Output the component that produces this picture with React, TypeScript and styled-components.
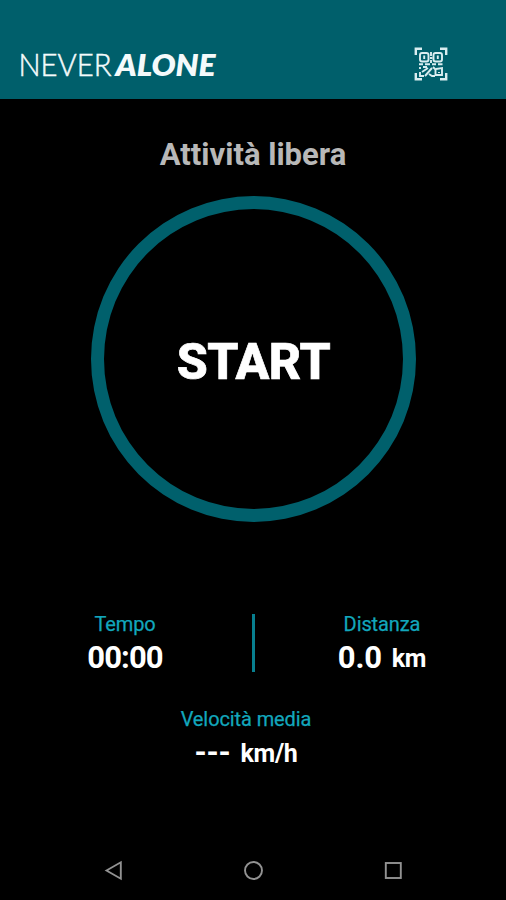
import React from 'react';
import styled, { createGlobalStyle } from 'styled-components';

const GlobalStyle = createGlobalStyle`
  * { box-sizing: border-box; }
  body { margin: 0; background: #000; font-family: Roboto, "Liberation Sans", sans-serif; }
`;

const Screen = styled.main`
  width: 506px;
  height: 900px;
  display: flex;
  flex-direction: column;
  align-items: center;
  overflow: hidden;
  background: #000;
`;

const Header = styled.header`
  width: 100%;
  height: 99px;
  flex: none;
  display: flex;
  align-items: flex-start;
  justify-content: space-between;
  padding: 47px 58px 0 18px;
  background: #005f6b;
`;

const Logo = styled.svg`
  display: block;
  width: 204px;
  height: 44px;
  overflow: visible;
  fill: #f4fafb;
  stroke: #f4fafb;
  font-family: Lato, sans-serif;
`;

const ScanButton = styled.button`
  display: block;
  width: 34px;
  height: 34px;
  margin: 0;
  padding: 0;
  border: 0;
  background: none;
`;

const Title = styled.h1`
  margin: 37px 0 0;
  height: 38px;
  font-size: 31px;
  line-height: 38px;
  font-weight: 700;
  letter-spacing: 0;
  white-space: nowrap;
  color: #b8b8b8;
`;

const StartButton = styled.button`
  width: 325px;
  height: 326px;
  flex: none;
  margin: 22px 0 0 1px;
  padding: 5px 0 0;
  border: 13px solid #00606c;
  border-radius: 50%;
  background: #000;
  color: #fff;
  font-family: inherit;
  font-size: 50px;
  font-weight: 800;
  letter-spacing: -0.4px;
  -webkit-text-stroke: 0.7px #fff;
`;

const Stats = styled.section`
  width: 100%;
  height: 59px;
  flex: none;
  display: grid;
  grid-template-columns: 250px 4px 252px;
  margin-top: 91px;
`;

const Divider = styled.div`
  margin: 1px 0 0 2px;
  width: 3px;
  height: 58px;
  background: #087f8f;
`;

const Stat = styled.div<{ $shift?: number }>`
  display: flex;
  flex-direction: column;
  align-items: center;
  padding-left: ${({ $shift = 0 }) => $shift}px;
`;

const SpeedRow = styled.section`
  width: 100%;
  margin-top: 36px;
  padding-right: 14px;
`;

const Label = styled.span`
  height: 24px;
  font-size: 20px;
  line-height: 22px;
  letter-spacing: -0.1px;
  color: #12a7bc;
  -webkit-text-stroke: 0.25px #12a7bc;
  white-space: nowrap;
`;

const Value = styled.div<{ $tight?: boolean }>`
  display: flex;
  align-items: baseline;
  height: 40px;
  margin-top: 1px;
  font-size: 31px;
  line-height: 40px;
  font-weight: 700;
  letter-spacing: ${({ $tight }) => ($tight ? '-0.9px' : '-0.2px')};
  color: #fff;
  white-space: nowrap;
`;

const Unit = styled.span`
  margin-left: 10px;
  font-size: 25px;
  letter-spacing: -0.3px;
  line-height: 38px;
  transform: translateY(-1px);
`;

const NavBar = styled.nav`
  width: 100%;
  height: 56px;
  margin-top: auto;
  flex: none;
  display: flex;
  justify-content: space-between;
  padding: 16px 102px 0 103px;
`;

const NavIcon = styled.svg`
  display: block;
  width: 21px;
  height: 21px;
  fill: none;
  stroke: #929292;
  stroke-width: 1.9;
`;

function QrIcon() {
  return (
    <svg width="34" height="34" viewBox="0 0 34 34" fill="none" stroke="#d9edf0">
      <path strokeWidth="2.4" d="M1.8 8V1.8H8M26 1.8h6.2V8M32.2 26v6.2H26M8 32.2H1.8V26" />
      <g strokeWidth="1.9">
        <rect x="6" y="6" width="8.5" height="8.5" rx="2" />
        <rect x="19.5" y="6" width="8.5" height="8.5" rx="2" />
        <path d="M10.2 8.5v3.5M23.8 8.5v3.5" />
        <path d="M17 5v4M16 11h2.5M17 13v3M5 17.2h4M11 17.2h5M18 17.2h4M24 17.2h4.5" />
        <path d="M6 20v2M9 20h4M6 25v4h4M8 25l6-4M11 29l7-8M15 27l3 2h3M19 20l3 3M22 22l6-1v7h-6.5v-5M25 25v1" />
      </g>
    </svg>
  );
}

export default function App() {
  return (
    <>
      <GlobalStyle />
      <Screen>
        <Header>
          <Logo viewBox="0 0 204 44" role="img" aria-label="NEVERALONE">
            <text x="0.5" y="28.5" fontSize="31" fontWeight="300" strokeWidth="0.5" textLength="93" lengthAdjust="spacingAndGlyphs">NEVER</text>
            <text x="97.5" y="28.5" fontSize="31" fontWeight="800" fontStyle="italic" strokeWidth="0" textLength="100" lengthAdjust="spacingAndGlyphs">ALONE</text>
          </Logo>
          <ScanButton aria-label="QR"><QrIcon /></ScanButton>
        </Header>
        <Title>Attività libera</Title>
        <StartButton>START</StartButton>
        <Stats>
          <Stat>
            <Label>Tempo</Label>
            <Value $tight>00:00</Value>
          </Stat>
          <Divider />
          <Stat $shift={4}>
            <Label>Distanza</Label>
            <Value>0.0<Unit>km</Unit></Value>
          </Stat>
        </Stats>
        <SpeedRow>
          <Stat>
            <Label>Velocità media</Label>
            <Value>---<Unit>km/h</Unit></Value>
          </Stat>
        </SpeedRow>
        <NavBar>
          <NavIcon viewBox="0 0 21 21"><path d="M3.5 10.5 17.8 2.3v16.4z" /></NavIcon>
          <NavIcon viewBox="0 0 21 21"><circle cx="10.5" cy="10.5" r="8.5" /></NavIcon>
          <NavIcon viewBox="0 0 21 21"><rect x="2.8" y="3" width="15" height="15" /></NavIcon>
        </NavBar>
      </Screen>
    </>
  );
}
